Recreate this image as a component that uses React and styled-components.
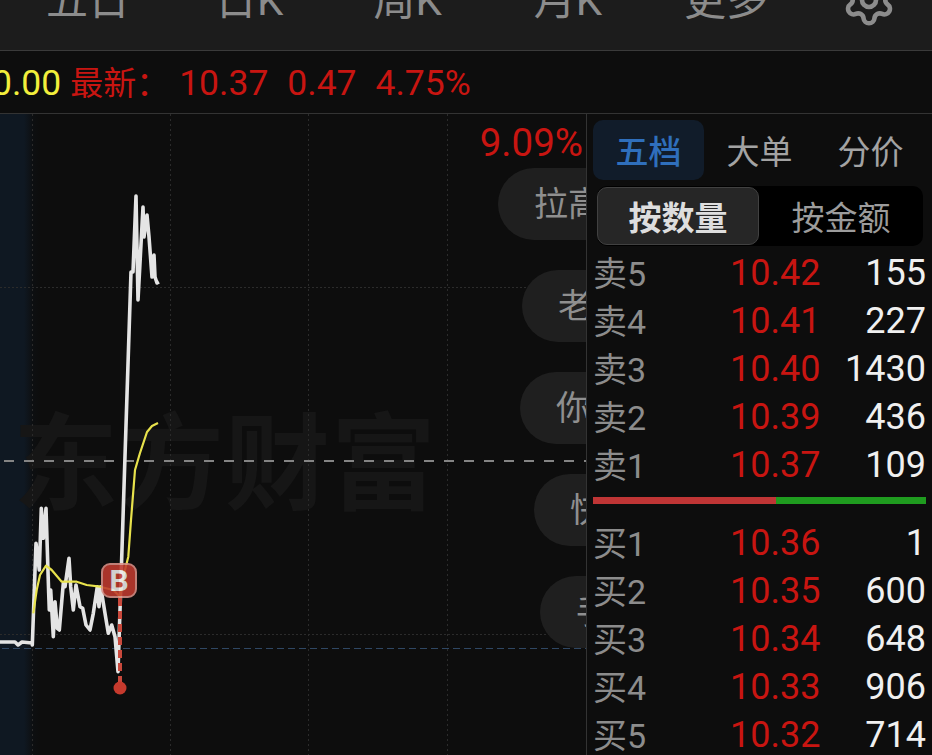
import React from 'react';
import styled, { createGlobalStyle } from 'styled-components';
import { Settings } from 'lucide-react';

const FONT = `Roboto, "Noto Sans CJK SC", sans-serif`;
const RED = '#c81511';

const Global = createGlobalStyle`
  html, body { margin: 0; background: #0d0d0d; overflow: hidden; }
  * { box-sizing: border-box; }
`;

const Page = styled.div`
  width: 932px; height: 755px; overflow: hidden;
  display: flex; flex-direction: column;
  font-family: ${FONT}; background: #0d0d0d;
`;
const Nav = styled.nav`
  flex: 0 0 51px; display: flex; align-items: flex-end;
  background: #1c1c1c; border-bottom: 1px solid #3a3a3a;
  padding: 0 0 35px 46px; overflow: hidden;
`;
const NavItem = styled.div`
  margin-left: ${p => p.$gap}px; font-size: 42px; line-height: 28px; height: 28px;
  color: #8c8c8c; white-space: nowrap; position: relative; flex: none;
`;
const Caret = styled.svg`
  position: absolute; right: -10px; top: 3px;
`;
const GearWrap = styled.div`
  margin-left: ${p => p.$gap}px; flex: none; height: 56px; margin-bottom: -13px; color: #8c8c8c;
`;
const Info = styled.div`
  flex: 0 0 63px; display: flex; align-items: center; gap: 19px;
  border-bottom: 1px solid #333; background: #0d0d0d;
  font-size: 35.5px; white-space: nowrap; color: ${RED}; overflow: hidden; padding-top: 1px;
`;
const Old = styled.span`
  color: #f2ee3c; margin-left: -28px; margin-right: -10px;
`;
const Latest = styled.span`
  font-size: 33px; margin-right: -9px; position: relative; top: -2px;
`;
const Main = styled.div`
  flex: 1; min-height: 0; display: flex;
`;
const Chart = styled.div`
  position: relative; flex: 0 0 587px; overflow: hidden;
  background: linear-gradient(90deg, #0f1822 0, #0f1822 24px, #0d0f11 33px, #0d0d0d 40px);
  border-right: 1px solid #333;
`;
const Watermark = styled.div`
  position: absolute; left: 13px; top: 287px; font-size: 105px; line-height: 130px;
  font-weight: 700; color: #161616; white-space: nowrap; letter-spacing: 1px;
`;
const Drawing = styled.svg`
  position: absolute; left: 0; top: 0;
`;
const Pct = styled.div`
  position: absolute; right: 3px; top: 8px; font-size: 38.5px; line-height: 42px; color: ${RED};
`;
const Pill = styled.div`
  position: absolute; left: ${p => p.$x}px; top: ${p => p.$y}px;
  width: 200px; height: 72px; border-radius: 36px; background: #1f1f1f;
  color: #8f8f8f; font-size: 34px; line-height: 72px; padding-left: 36px; white-space: nowrap;
`;
const Badge = styled.div`
  position: absolute; left: 101px; top: 449px; width: 36px; height: 35px; border-radius: 9px;
  background: #bf3a2e; border: 2px solid #d98f86; color: #ececec; opacity: 0.88;
  font-size: 30px; font-weight: 700; line-height: 31px; text-align: center;
`;
const Panel = styled.aside`
  flex: 1; min-width: 0; padding: 6px 6px 0; display: flex; flex-direction: column;
  background: #0d0d0d; overflow: hidden;
`;
const Tabs = styled.div`
  display: grid; grid-template-columns: repeat(3, 1fr); height: 60px; flex: none;
`;
const Tab = styled.div`
  display: flex; align-items: center; justify-content: center; border-radius: 10px;
  font-size: 33px; color: ${p => (p.$active ? '#2f6fbc' : '#a3a3a3')};
  background: ${p => (p.$active ? '#111c2a' : 'transparent')};
  font-weight: ${p => (p.$active ? 500 : 400)};
`;
const Segment = styled.div`
  display: grid; grid-template-columns: 162px 1fr; height: 60px; flex: none;
  margin: 6px 3px 3px 4px; background: #000; border-radius: 10px;
`;
const SegItem = styled.div`
  display: flex; align-items: center; justify-content: center; border-radius: 10px; font-size: 33px;
  margin: ${p => (p.$active ? '1px 0' : '0')};
  color: ${p => (p.$active ? '#dedede' : '#9c9c9c')};
  font-weight: ${p => (p.$active ? 700 : 400)};
  background: ${p => (p.$active ? '#262626' : 'transparent')};
  border: ${p => (p.$active ? '1px solid #414141' : 'none')};
`;
const Row = styled.div`
  flex: none; height: 48px; display: grid; grid-template-columns: 137px 1fr auto; align-items: center;
  font-size: 36px; line-height: 48px;
`;
const RowLabel = styled.span`
  color: #8c8c8c; font-size: 34px; position: relative; top: 1px; line-height: 48px; height: 48px;
`;
const Price = styled.span`
  color: ${RED};
`;
const Qty = styled.span`
  color: #f0f0f0; text-align: right;
`;
const Bar = styled.div`
  flex: none; height: 7px; margin: 8px 0 15px; display: flex;
`;
const BarPart = styled.div`
  height: 100%; background: ${p => p.$c}; width: ${p => p.$w}%;
`;

const toPts = a => a.map(([x, y]) => `${x},${y}`).join(' ');
const zoom = a => a.map(([x, y]) => [+(x / 3).toFixed(1), +(y / 3 + 480 - 114).toFixed(1)]);

const whitePts = [
  [0, 528], [15, 528], [18, 531], [22, 528], [32, 529],
  ...zoom([[97, 495], [108, 190], [118, 270], [124, 85], [130, 175], [138, 85], [146, 340], [148, 390], [152, 330], [160, 470], [165, 365], [172, 445], [178, 450], [190, 310], [195, 320], [207, 235], [212, 320], [220, 390], [228, 315], [240, 380], [248, 385], [258, 435], [270, 450], [280, 400], [292, 320], [297, 380], [302, 320], [315, 400], [325, 460], [335, 435], [345, 470], [354, 575]]),
  [131, 158], [133, 158], [136, 82], [138, 186], [143, 93], [144, 123], [147, 101], [149, 123], [152, 163], [154, 141], [155, 163], [157, 169], [159, 168],
];
const yellowPts = [
  ...zoom([[100, 400], [110, 330], [120, 285], [138, 257], [155, 270], [185, 305], [230, 305], [260, 315], [300, 320], [340, 330], [360, 350], [370, 290], [385, 230]]),
  [131, 406], [135, 356], [140, 339], [147, 318], [152, 312], [158, 309],
];

const ChartArt = () => (
  <Drawing width="587" height="641" viewBox="0 0 587 641">
    {[32, 170, 308, 447].map(x => (
      <line key={x} x1={x + 0.5} y1="0" x2={x + 0.5} y2="641" stroke="#2b2b2b" strokeDasharray="2 3" />
    ))}
    {[173, 520].map(y => (
      <line key={y} x1="0" y1={y + 0.5} x2="587" y2={y + 0.5} stroke="#2b2b2b" strokeDasharray="2 2" />
    ))}
    <line x1="4" y1="347" x2="587" y2="347" stroke="#848484" strokeWidth="2" strokeDasharray="10 10" />
    <line x1="2" y1="534.5" x2="587" y2="534.5" stroke="#2f4763" strokeWidth="1" strokeDasharray="7 4" />
    <polyline points={toPts(whitePts)} fill="none" stroke="#e4e4e4" strokeWidth="3.6" strokeLinejoin="round" />
    <polyline points={toPts(yellowPts)} fill="none" stroke="#e8e24c" strokeWidth="2.2" strokeLinejoin="round" />
    <line x1="120" y1="484" x2="120" y2="568" stroke="#c9493c" strokeWidth="4" strokeDasharray="8 5" />
    <circle cx="120" cy="574" r="6.5" fill="#c63a2d" />
  </Drawing>
);

const sells = [['卖5', '10.42', '155'], ['卖4', '10.41', '227'], ['卖3', '10.40', '1430'], ['卖2', '10.39', '436'], ['卖1', '10.37', '109']];
const buys = [['买1', '10.36', '1'], ['买2', '10.35', '600'], ['买3', '10.34', '648'], ['买4', '10.33', '906'], ['买5', '10.32', '714']];

const Quote = ({ r }) => (
  <Row>
    <RowLabel>{r[0]}</RowLabel>
    <Price>{r[1]}</Price>
    <Qty>{r[2]}</Qty>
  </Row>
);

export default function App() {
  return (
    <Page>
      <Global />
      <Nav>
        <NavItem $gap={0}>五日</NavItem>
        <NavItem $gap={85}>日K</NavItem>
        <NavItem $gap={90}>周K</NavItem>
        <NavItem $gap={92}>月K</NavItem>
        <NavItem $gap={82}>
          更多
          <Caret width="8" height="8" viewBox="0 0 8 8"><path d="M0 0h8L4 6z" fill="#8c8c8c" /></Caret>
        </NavItem>
        <GearWrap $gap={73}><Settings size={56} strokeWidth={2} /></GearWrap>
      </Nav>
      <Info>
        <Old>10.00</Old>
        <Latest>最新：</Latest>
        <span>10.37</span>
        <span>0.47</span>
        <span>4.75%</span>
      </Info>
      <Main>
        <Chart>
          <Watermark>东方财富</Watermark>
          <ChartArt />
          <Pct>9.09%</Pct>
          <Pill $x={498} $y={54}>拉高出货</Pill>
          <Pill $x={522} $y={156}>老师</Pill>
          <Pill $x={520} $y={258}>你好</Pill>
          <Pill $x={534} $y={360}>快跑</Pill>
          <Pill $x={540} $y={462}>手慢</Pill>
          <Badge>B</Badge>
        </Chart>
        <Panel>
          <Tabs>
            <Tab $active>五档</Tab>
            <Tab>大单</Tab>
            <Tab>分价</Tab>
          </Tabs>
          <Segment>
            <SegItem $active>按数量</SegItem>
            <SegItem>按金额</SegItem>
          </Segment>
          {sells.map(r => <Quote key={r[0]} r={r} />)}
          <Bar>
            <BarPart $c="#bf3535" $w={55} />
            <BarPart $c="#1f9b1f" $w={45} />
          </Bar>
          {buys.map(r => <Quote key={r[0]} r={r} />)}
        </Panel>
      </Main>
    </Page>
  );
}
